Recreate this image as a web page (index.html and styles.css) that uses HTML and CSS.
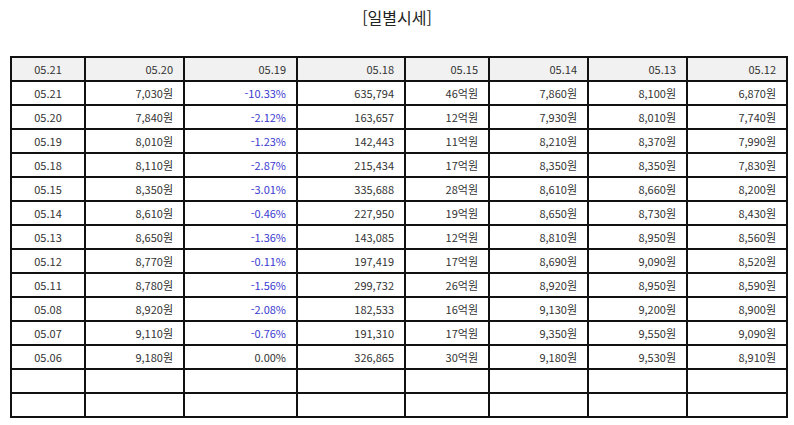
FILE: index.html
```html
<!DOCTYPE html>
<html lang="ko">
<head>
<meta charset="utf-8">
<link rel="stylesheet" href="styles.css">
</head>
<body>
<div class="page">
  <h1 class="title">[일별시세]</h1>
  <table class="grid">
    <colgroup>
      <col class="c1"><col class="c2"><col class="c3"><col class="c4"><col class="c5"><col class="c6"><col class="c7"><col class="c8">
    </colgroup>
    <thead>
      <tr><th class="center">05.21</th><th>05.20</th><th>05.19</th><th>05.18</th><th>05.15</th><th>05.14</th><th>05.13</th><th>05.12</th></tr>
    </thead>
    <tbody>
      <tr><td class="center">05.21</td><td>7,030원</td><td class="down">-10.33%</td><td>635,794</td><td>46억원</td><td>7,860원</td><td>8,100원</td><td>6,870원</td></tr>
      <tr><td class="center">05.20</td><td>7,840원</td><td class="down">-2.12%</td><td>163,657</td><td>12억원</td><td>7,930원</td><td>8,010원</td><td>7,740원</td></tr>
      <tr><td class="center">05.19</td><td>8,010원</td><td class="down">-1.23%</td><td>142,443</td><td>11억원</td><td>8,210원</td><td>8,370원</td><td>7,990원</td></tr>
      <tr><td class="center">05.18</td><td>8,110원</td><td class="down">-2.87%</td><td>215,434</td><td>17억원</td><td>8,350원</td><td>8,350원</td><td>7,830원</td></tr>
      <tr><td class="center">05.15</td><td>8,350원</td><td class="down">-3.01%</td><td>335,688</td><td>28억원</td><td>8,610원</td><td>8,660원</td><td>8,200원</td></tr>
      <tr><td class="center">05.14</td><td>8,610원</td><td class="down">-0.46%</td><td>227,950</td><td>19억원</td><td>8,650원</td><td>8,730원</td><td>8,430원</td></tr>
      <tr><td class="center">05.13</td><td>8,650원</td><td class="down">-1.36%</td><td>143,085</td><td>12억원</td><td>8,810원</td><td>8,950원</td><td>8,560원</td></tr>
      <tr><td class="center">05.12</td><td>8,770원</td><td class="down">-0.11%</td><td>197,419</td><td>17억원</td><td>8,690원</td><td>9,090원</td><td>8,520원</td></tr>
      <tr><td class="center">05.11</td><td>8,780원</td><td class="down">-1.56%</td><td>299,732</td><td>26억원</td><td>8,920원</td><td>8,950원</td><td>8,590원</td></tr>
      <tr><td class="center">05.08</td><td>8,920원</td><td class="down">-2.08%</td><td>182,533</td><td>16억원</td><td>9,130원</td><td>9,200원</td><td>8,900원</td></tr>
      <tr><td class="center">05.07</td><td>9,110원</td><td class="down">-0.76%</td><td>191,310</td><td>17억원</td><td>9,350원</td><td>9,550원</td><td>9,090원</td></tr>
      <tr><td class="center">05.06</td><td>9,180원</td><td>0.00%</td><td>326,865</td><td>30억원</td><td>9,180원</td><td>9,530원</td><td>8,910원</td></tr>
      <tr><td></td><td></td><td></td><td></td><td></td><td></td><td></td><td></td></tr>
      <tr><td></td><td></td><td></td><td></td><td></td><td></td><td></td><td></td></tr>
    </tbody>
  </table>
</div>
</body>
</html>
```

FILE: styles.css
```css
html, body {
  margin: 0;
  padding: 0;
  background: #ffffff;
}

.page {
  width: 794px;
  padding: 0 0 0 10px;
  box-sizing: border-box;
  font-family: "Noto Sans CJK KR", "Noto Sans", sans-serif;
  color: #333333;
}

.title {
  margin: 0 0 0 -10px;
  height: 56px;
  padding-top: 5px;
  box-sizing: border-box;
  text-align: center;
  font-size: 16px;
  font-weight: 400;
  line-height: 24px;
  color: #222222;
}

.grid {
  width: 777px;
  border-collapse: collapse;
  table-layout: fixed;
  font-size: 11px;
}

.c1 { width: 74px; }
.c2 { width: 99px; }
.c3 { width: 113px; }
.c4 { width: 108px; }
.c5 { width: 84px; }
.c6 { width: 99px; }
.c7 { width: 99px; }
.c8 { width: 100px; }

.grid th,
.grid td {
  border: 2px solid #111111;
  height: 22px;
  padding: 0 10px 0 4px;
  text-align: right;
  white-space: nowrap;
  font-weight: 400;
  line-height: 20px;
}

.grid th {
  background: #f1f1f1;
}

.grid .center {
  text-align: center;
  padding: 0;
}

.grid .down {
  color: #3a3acf;
}
```
